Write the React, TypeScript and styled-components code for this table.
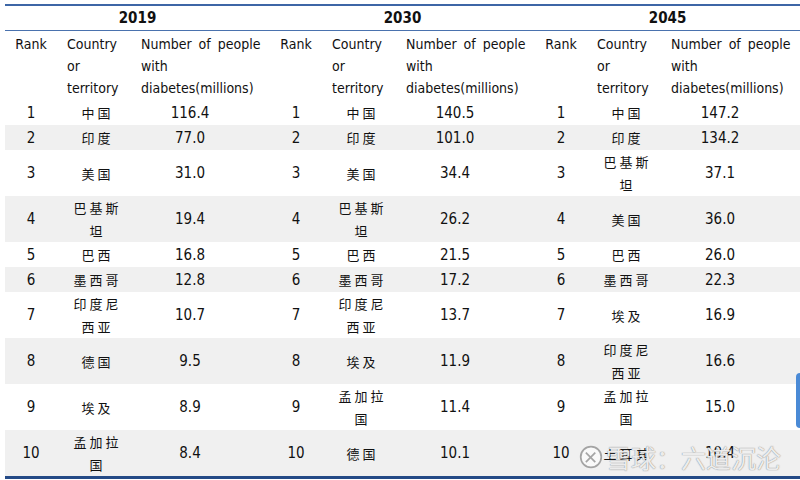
import styled, { createGlobalStyle } from "styled-components";

const GlobalStyle = createGlobalStyle`
  html, body {
    margin: 0;
    padding: 0;
    background: #ffffff;
    overflow: hidden;
  }
  body {
    width: 800px;
    height: 480px;
    font-family: "DejaVu Sans Condensed", "DejaVu Sans", "Noto Sans CJK SC", sans-serif;
    color: #111111;
  }
`;

interface Entry {
  country: string[];
  value: string;
}

interface RowData {
  rank: number;
  tall: boolean;
  years: Entry[];
}

const e = (country: string, value: string): Entry => ({ country: country.split("/"), value });

const rows: RowData[] = [
  { rank: 1, tall: false, years: [e("中国", "116.4"), e("中国", "140.5"), e("中国", "147.2")] },
  { rank: 2, tall: false, years: [e("印度", "77.0"), e("印度", "101.0"), e("印度", "134.2")] },
  { rank: 3, tall: true, years: [e("美国", "31.0"), e("美国", "34.4"), e("巴基斯/坦", "37.1")] },
  { rank: 4, tall: true, years: [e("巴基斯/坦", "19.4"), e("巴基斯/坦", "26.2"), e("美国", "36.0")] },
  { rank: 5, tall: false, years: [e("巴西", "16.8"), e("巴西", "21.5"), e("巴西", "26.0")] },
  { rank: 6, tall: false, years: [e("墨西哥", "12.8"), e("墨西哥", "17.2"), e("墨西哥", "22.3")] },
  { rank: 7, tall: true, years: [e("印度尼/西亚", "10.7"), e("印度尼/西亚", "13.7"), e("埃及", "16.9")] },
  { rank: 8, tall: true, years: [e("德国", "9.5"), e("埃及", "11.9"), e("印度尼/西亚", "16.6")] },
  { rank: 9, tall: true, years: [e("埃及", "8.9"), e("孟加拉/国", "11.4"), e("孟加拉/国", "15.0")] },
  { rank: 10, tall: true, years: [e("孟加拉/国", "8.4"), e("德国", "10.1"), e("土耳其", "10.4")] },
];

const yearsList = ["2019", "2030", "2045"];

const Page = styled.div`
  position: relative;
  width: 800px;
  height: 480px;
  padding: 4px 0 0 5px;
  box-sizing: border-box;
`;

const Table = styled.table`
  width: 795px;
  border-collapse: collapse;
  table-layout: fixed;
  border-top: 2px solid #3d66a6;
  border-bottom: 3px solid #244a86;
`;

const YearCell = styled.th`
  height: 24px;
  padding: 0;
  font-size: 15px;
  font-weight: bold;
  text-align: center;
  border-bottom: 1px solid #4a72ae;
`;

const HeadCell = styled.th<{ $pad: number }>`
  padding: 2px 0 0 ${(p) => p.$pad}px;
  height: 67px;
  vertical-align: top;
  font-size: 14px;
  font-weight: normal;
  line-height: 22px;
  text-align: left;
  word-spacing: 3px;
`;

const RankHead = styled(HeadCell)`
  text-align: center;
  padding: 2px 0 0 0;
`;

const Row = styled.tr<{ $tall: boolean; $shade: boolean }>`
  height: ${(p) => (p.$tall ? 46 : 25)}px;
  background: ${(p) => (p.$shade ? "#f0f0f0" : "#ffffff")};
`;

const Cell = styled.td`
  padding: 0;
  font-size: 15px;
  text-align: center;
  vertical-align: middle;
`;

const ValueCell = styled(Cell)`
  padding-right: 25px;
`;

const CountryCell = styled(Cell)`
  font-family: "Noto Sans CJK SC", sans-serif;
  font-size: 13px;
  line-height: 23px;
  letter-spacing: 3px;
  padding-left: 3px;
`;

const Caption = styled.div`
  margin-top: 2px;
  font-family: "Noto Sans CJK SC", sans-serif;
  font-size: 13px;
  color: #1f4e9a;
`;

const ScrollThumb = styled.div`
  position: absolute;
  right: -4px;
  top: 373px;
  width: 8px;
  height: 55px;
  border-radius: 4px;
  background: #4a8ad6;
`;

const Watermark = styled.div`
  position: absolute;
  left: 579px;
  top: 443px;
  display: flex;
  align-items: center;
  gap: 3px;
  font-family: "Noto Sans CJK SC", sans-serif;
  font-size: 25px;
  line-height: 28px;
  color: rgba(255, 255, 255, 0.85);
  text-shadow: 0 0 1px rgba(120, 120, 120, 0.7), 0 0 1px rgba(120, 120, 120, 0.7);
`;

const Logo = () => (
  <svg width="24" height="24" viewBox="0 0 28 28">
    <circle cx="14" cy="14" r="12" fill="rgba(255,255,255,0.6)" stroke="rgba(130,130,130,0.7)" strokeWidth="2" />
    <path d="M8 9 L19 20 M19 9 L8 20" stroke="rgba(130,130,130,0.7)" strokeWidth="2" fill="none" />
  </svg>
);

export default function App() {
  return (
    <>
      <GlobalStyle />
      <Page>
        <Table>
          <colgroup>
            {yearsList.map((y) => [
              <col key={y + "r"} style={{ width: 52 }} />,
              <col key={y + "c"} style={{ width: 78 }} />,
              <col key={y + "n"} style={{ width: 135 }} />,
            ])}
          </colgroup>
          <thead>
            <tr>
              {yearsList.map((y) => (
                <YearCell key={y} colSpan={3}>
                  {y}
                </YearCell>
              ))}
            </tr>
            <tr>
              {yearsList.map((y) => [
                <RankHead key={y + "r"} $pad={0}>
                  Rank
                </RankHead>,
                <HeadCell key={y + "c"} $pad={10}>
                  Country
                  <br />
                  or
                  <br />
                  territory
                </HeadCell>,
                <HeadCell key={y + "n"} $pad={6}>
                  Number of people
                  <br />
                  with
                  <br />
                  diabetes(millions)
                </HeadCell>,
              ])}
            </tr>
          </thead>
          <tbody>
            {rows.map((r) => (
              <Row key={r.rank} $tall={r.tall} $shade={r.rank % 2 === 0}>
                {r.years.map((en, i) => [
                  <Cell key={i + "r"}>{r.rank}</Cell>,
                  <CountryCell key={i + "c"}>
                    {en.country.map((line, k) => (
                      <div key={k}>{line}</div>
                    ))}
                  </CountryCell>,
                  <ValueCell key={i + "n"}>{en.value}</ValueCell>,
                ])}
              </Row>
            ))}
          </tbody>
        </Table>
        <Caption>资料来源：IDF，国盛证券研究所</Caption>
        <ScrollThumb />
        <Watermark>
          <Logo />
          <span>雪球：六道沉沦</span>
        </Watermark>
      </Page>
    </>
  );
}
